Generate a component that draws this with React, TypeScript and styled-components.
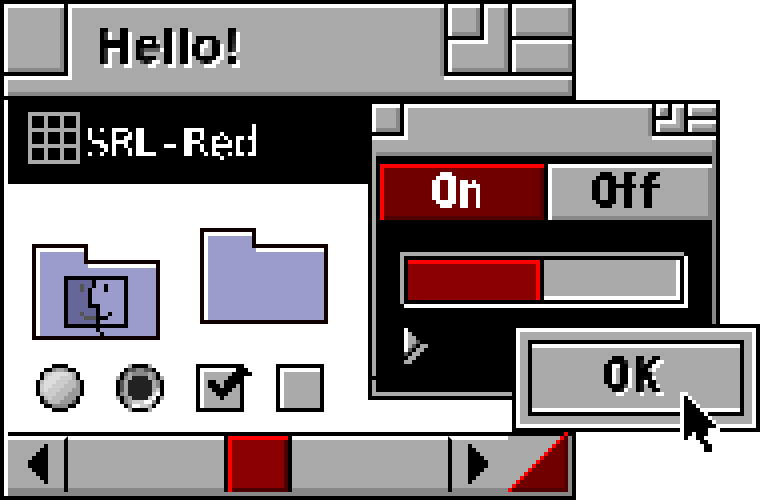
import React from 'react'
import styled, { createGlobalStyle } from 'styled-components'

const GRAY = '#aaaaaa'
const SHADE = '#888888'
const RED = '#ff0000'
const LAVENDER = '#9c9ccc'
const INK = '#100000'

const palette: Record<string, string> = {
  K: '#000000',
  X: '#222222',
  D: '#555555',
  G: '#888888',
  H: '#999999',
  A: '#aaaaaa',
  B: '#bbbbbb',
  C: '#cccccc',
  E: '#dddddd',
  W: '#ffffff',
}

const GlobalStyle = createGlobalStyle`
  html, body {
    margin: 0;
    background: #fff;
    overflow: hidden;
  }
`

const Stage = styled.div`
  position: relative;
  width: 760px;
  height: 500px;
  overflow: hidden;
`

const PixelText = styled.span`
  display: block;
  filter: url(#pixelate);
`

const Window = styled.div`
  position: absolute;
  left: 0;
  top: 0;
  width: 576px;
  height: 500px;
  box-sizing: border-box;
  padding: 4px;
  background: #000;
  display: flex;
  flex-direction: column;
  gap: 4px;
`

const TitleBar = styled.div`
  display: flex;
  flex-direction: column;
  flex: none;
`

const TitleRow = styled.div`
  display: flex;
  background: ${GRAY};
`

const TitleStrip = styled.div<{ $height: number; $edge?: string }>`
  height: ${p => p.$height}px;
  box-sizing: border-box;
  background: ${GRAY};
  border-left: 4px solid ${p => p.$edge || GRAY};
  box-shadow: inset -4px -4px 0 ${SHADE};
`

const Raised = styled.div<{ $w: number; $h: number }>`
  position: relative;
  width: ${p => p.$w}px;
  height: ${p => p.$h}px;
  box-sizing: border-box;
  flex: none;
  background: ${GRAY};
  border-top: 4px solid #fff;
  border-left: 4px solid #fff;
  box-shadow: inset -4px -4px 0 ${SHADE};
`

const BoxWell = styled.div`
  display: flex;
  flex: none;
  align-self: flex-start;
  border-right: 4px solid #fff;
  border-bottom: 4px solid #fff;
`

const BoxFrame = styled.div`
  display: flex;
  border-right: 4px solid #000;
  border-bottom: 4px solid #000;
`

const NestedBox = styled.div`
  position: absolute;
  left: -4px;
  top: -4px;
`

const TitleCenter = styled.div<{ $height: number }>`
  flex: 1;
  height: ${p => p.$height}px;
  box-sizing: border-box;
  border-top: 4px solid #fff;
  padding: 8px 0 0 24px;
  box-shadow: inset -4px 0 0 ${SHADE};
`

const TitleText = styled(PixelText)`
  font: bold 50px/60px 'Liberation Sans', sans-serif;
  color: #000;
  -webkit-text-stroke: 0.6px #000;
  letter-spacing: 1px;
  text-shadow: 4px 4px 0 #fff;
  width: 160px;
  height: 60px;
`

const Controls = styled.div`
  display: flex;
  flex: none;
  border-bottom: 4px solid #fff;
`

const ControlsFrame = styled.div`
  display: flex;
  gap: 4px;
  background: #000;
  border-left: 4px solid #000;
  border-bottom: 4px solid #000;
`

const ControlStack = styled.div`
  display: flex;
  flex-direction: column;
  gap: 4px;
`

const Body = styled.div`
  flex: 1;
  min-height: 0;
  display: flex;
  flex-direction: column;
  background: #fff;
  border-left: 4px solid #fff;
`

const Band = styled.div`
  height: 84px;
  box-sizing: border-box;
  flex: none;
  padding: 12px 0 0 20px;
  background: #000;
  display: flex;
  gap: 4px;
`

const GridIcon = styled.div`
  display: grid;
  grid-template-columns: repeat(3, 12px);
  grid-auto-rows: 12px;
  gap: 4px;
  padding: 4px;
  align-self: flex-start;
  background: ${GRAY};
`

const GridCell = styled.div`
  background: #000;
`

const BandText = styled(PixelText)`
  font: 43px/54px 'DejaVu Sans Mono', monospace;
  color: #fff;
  letter-spacing: -1px;
  margin-top: 4px;
  width: 200px;
  height: 56px;
`

const Desk = styled.div`
  flex: 1;
  padding: 44px 0 0 24px;
  display: flex;
  flex-direction: column;
`

const FolderRow = styled.div`
  display: flex;
  align-items: flex-start;
  gap: 40px;
`

const FolderSlot = styled.div<{ $drop?: number }>`
  margin-top: ${p => p.$drop || 0}px;
  display: flex;
`

const WidgetRow = styled.div`
  display: flex;
  gap: 32px;
  margin: 24px 0 0 4px;
`

const CheckBox = styled.div`
  position: relative;
  width: 48px;
  height: 48px;
  box-sizing: border-box;
  border: 4px solid #000;
  background: ${GRAY};
  box-shadow: inset 4px 4px 0 #fff;
`

const CheckMark = styled.div`
  position: absolute;
  left: 8px;
  top: 0;
  display: flex;
`

const ScrollBar = styled.div`
  flex: none;
  display: flex;
  flex-direction: column;
  border-top: 4px solid #000;
  background: ${SHADE};
  padding: 0 4px 4px 0;
`

const ScrollRow = styled.div`
  display: flex;
  height: 56px;
  background: ${GRAY};
`

const ScrollPart = styled.div<{ $w?: number; $pad?: number; $divider?: 'left' | 'right' }>`
  ${p => (p.$w ? `width: ${p.$w}px; flex: none;` : 'flex: 1;')}
  box-sizing: border-box;
  display: flex;
  align-items: center;
  background: ${GRAY};
  border-top: 4px solid #fff;
  padding: 0 0 4px ${p => p.$pad || 0}px;
  box-shadow: inset 0 -4px 0 ${SHADE};
  ${p => p.$divider && `border-${p.$divider}: 4px solid #000;`}
`

const Thumb = styled.div`
  width: 60px;
  flex: none;
  box-sizing: border-box;
  background: #8b0000;
  border-top: 4px solid ${RED};
  border-left: 4px solid ${RED};
  box-shadow: inset -4px -4px 0 #4a0000, -4px 0 0 #000, 4px 0 0 #000;
  margin: 0 4px;
`

const Resize = styled.div`
  position: relative;
  width: 60px;
  flex: none;
`

const ResizeArt = styled.svg`
  position: absolute;
  left: 0;
  bottom: 0;
  display: block;
`

const Dialog = styled.div`
  position: absolute;
  left: 368px;
  top: 100px;
  width: 352px;
  height: 300px;
  box-sizing: border-box;
  padding: 4px;
  background: #000;
  display: flex;
  flex-direction: column;
`

const DialogFrame = styled.div`
  position: relative;
  flex: 1;
  display: flex;
  flex-direction: column;
  border-left: 4px solid ${GRAY};
  border-right: 4px solid ${SHADE};
  border-bottom: 4px solid ${GRAY};
  background: #000;
  padding: 8px 0 0 4px;
`

const FrameNotch = styled.div`
  position: absolute;
  left: -4px;
  top: 220px;
  width: 4px;
  height: 4px;
  background: #000;
`

const ToggleRow = styled.div`
  display: flex;
  gap: 4px;
`

const Toggle = styled.div<{ $on?: boolean }>`
  width: 164px;
  height: 56px;
  box-sizing: border-box;
  display: flex;
  padding-left: ${p => (p.$on ? 48 : 40)}px;
  background: ${p => (p.$on ? '#700000' : GRAY)};
  border-top: 4px solid ${p => (p.$on ? RED : '#fff')};
  border-left: 4px solid ${p => (p.$on ? RED : '#fff')};
  box-shadow: inset -4px -4px 0 ${p => (p.$on ? '#500000' : SHADE)};
`

const ToggleLabel = styled(PixelText)<{ $on?: boolean }>`
  font: bold 44px/48px 'DejaVu Sans Mono', monospace;
  color: ${p => (p.$on ? '#fff' : '#000')};
  -webkit-text-stroke: 1px ${p => (p.$on ? '#fff' : '#000')};
  letter-spacing: ${p => (p.$on ? '0' : '-4px')};
  height: 48px;
  width: 80px;
`

const Meter = styled.div`
  display: flex;
  gap: 4px;
  width: 280px;
  height: 48px;
  box-sizing: border-box;
  padding: 4px;
  margin: 36px 0 0 24px;
  background: #000;
  box-shadow:
    -4px 0 0 ${GRAY}, 0 -4px 0 ${GRAY}, -4px -4px 0 ${GRAY},
    4px 0 0 #fff, 0 4px 0 #fff, 4px 4px 0 #fff;
`

const MeterFill = styled.div`
  width: 132px;
  box-sizing: border-box;
  background: #8b0000;
  border-top: 4px solid ${RED};
  border-right: 4px solid ${RED};
`

const MeterRest = styled.div`
  flex: 1;
  background: ${GRAY};
  border-right: 4px solid #fff;
  border-bottom: 4px solid #fff;
`

const Disclosure = styled.div`
  display: flex;
  margin: 24px 0 0 24px;
`

const Alert = styled.div`
  position: absolute;
  left: 512px;
  top: 324px;
  width: 248px;
  height: 108px;
  box-sizing: border-box;
  border: 4px solid #000;
  display: flex;
`

const AlertInner = styled.div`
  flex: 1;
  display: flex;
  border: 4px solid #fff;
  background: ${GRAY};
  padding: 8px;
`

const OkFrame = styled.div`
  flex: 1;
  display: flex;
  border: 4px solid #000;
`

const OkButton = styled.div`
  flex: 1;
  display: flex;
  background: ${GRAY};
  border-top: 4px solid #fff;
  border-bottom: 4px solid #fff;
  padding: 4px 0 0 72px;
`

const OkLabel = styled(PixelText)`
  font: bold 44px/48px 'DejaVu Sans Mono', monospace;
  color: #000;
  -webkit-text-stroke: 1px #000;
  letter-spacing: 3px;
  text-shadow: 4px 4px 0 #fff;
  width: 80px;
  height: 52px;
`

const Cursor = styled.div`
  position: absolute;
  left: 680px;
  top: 392px;
  display: flex;
`

const ArtSvg = styled.svg`
  display: block;
  flex: none;
`

const Pixels: React.FC<{ rows: string[] }> = ({ rows }) => (
  <ArtSvg width={rows[0].length * 4} height={rows.length * 4} shapeRendering="crispEdges">
    {rows.map((row, y) =>
      row.split('').map((c, x) =>
        palette[c] ? <rect key={`${x}-${y}`} x={x * 4} y={y * 4} width={4} height={4} fill={palette[c]} /> : null
      )
    )}
  </ArtSvg>
)

const radioOff = [
  '....KKKK....',
  '..KKGAAGKK..',
  '.KBCEEEECAK.',
  '.KCEEECCCAK.',
  'KBEEECCCBBHK',
  'KCEECCCBBBHK',
  'KCECCCBBBHHK',
  'KBCCCBBBHHHK',
  '.KBCBBBHHHK.',
  '.KDBBBHHHDK.',
  '..KKGGGGKK..',
  '....KKKK....',
]

const radioOn = [
  '...AKKKKA...',
  '..KDDGGDDK..',
  '.KDAGGGGAGK.',
  'AKGAXXXXAGKA',
  'KDAXXXXXXAGK',
  'KDAXXXXXXAGK',
  'KDAXXXXXXACK',
  'KGAXXXXXXCWK',
  'AKGAXXXXCWKA',
  '.KGACCCWWGK.',
  '..KGWWCCAK..',
  '...AKKKKA...',
]

const check = [
  '.......KKK.',
  '......KKKKK',
  '.....KKKK..',
  'KK..KKKK...',
  'KKK.KKK....',
  '.KKKKK.....',
  '..KKK......',
  '...K.......',
]

const arrowLeft = ['....K', '...KK', '..KKK', '.KKKK', 'KKKKK', 'KKKKK', '.KKKK', '..KKK', '...KK', '....K']
const arrowRight = ['K....', 'KK...', 'KKK..', 'KKKK.', 'KKKKK', 'KKKKK', 'KKKK.', 'KKK..', 'KK...', 'K....']

const disclosure = ['W.....', 'WA....', 'WAA...', 'WAAD..', 'WAD.AA', 'WD.AA.', 'D.AA..', '.AA...', 'AA....']

const arrowCursor = [
  'WW........',
  'WKW.......',
  'WKKW......',
  'WKKKW.....',
  'WKKKKW....',
  'WKKKKKW...',
  'WKKKKKKW..',
  'WKKKKKKKW.',
  'WKKKKKKKKW',
  'WKKKKKKWWW',
  'WKKWKKKW..',
  'WKWWKKW...',
  'WW..WKKW..',
  '.....WKKW.',
  '.....WKKW.',
  '.....WWWW.',
]

const Folder: React.FC<{ finder?: boolean }> = ({ finder }) => (
  <ArtSvg width={128} height={96} shapeRendering="crispEdges">
    <polygon points="0,0 56,0 56,16 128,16 128,96 0,96" fill={INK} />
    <polygon points="4,4 52,4 52,20 124,20 124,92 4,92" fill="#fff" />
    <polygon points="8,8 52,8 52,20 56,20 56,24 124,24 124,92 8,92" fill={LAVENDER} />
    {finder && (
      <g>
        <polygon points="36,36 60,36 60,44 56,44 56,64 64,64 64,80 36,80" fill="#666699" />
        <path d="M32 32h64v52h-64zM36 36v44h56v-44z" fill="#000" fillRule="evenodd" />
        <rect x={60} y={36} width={4} height={8} fill="#000" />
        <rect x={56} y={44} width={4} height={20} fill="#000" />
        <rect x={56} y={60} width={12} height={4} fill="#000" />
        <rect x={64} y={64} width={4} height={24} fill="#000" />
        <rect x={68} y={88} width={4} height={4} fill="#000" />
        <rect x={48} y={40} width={4} height={8} fill="#555" />
        <rect x={72} y={40} width={4} height={8} fill="#000" />
        <rect x={48} y={68} width={4} height={4} fill="#555" />
        <rect x={52} y={72} width={12} height={4} fill="#555" />
        <rect x={64} y={72} width={12} height={4} fill="#000" />
        <rect x={76} y={68} width={4} height={4} fill="#000" />
      </g>
    )}
  </ArtSvg>
)

const ResizeCorner = () => {
  const cells: React.ReactNode[] = []
  for (let r = 0; r < 15; r++) {
    const start = 14 - r
    cells.push(<rect key={`r${r}`} x={start * 4} y={r * 4} width={4} height={4} fill={RED} />)
    if (r > 0) {
      cells.push(<rect key={`f${r}`} x={(start + 1) * 4} y={r * 4} width={(r - 1) * 4} height={4} fill="#700000" />)
      cells.push(<rect key={`s${r}`} x={56} y={r * 4} width={4} height={4} fill="#500000" />)
    }
  }
  cells.push(<rect key="bottom" x={4} y={56} width={56} height={4} fill="#500000" />)
  return (
    <ResizeArt width={60} height={60} shapeRendering="crispEdges">
      {cells}
    </ResizeArt>
  )
}

const CloseBox: React.FC<{ w: number; h: number }> = ({ w, h }) => (
  <BoxWell>
    <BoxFrame>
      <Raised $w={w} $h={h} />
    </BoxFrame>
  </BoxWell>
)

const WindowControls: React.FC<{ small?: boolean }> = ({ small }) => (
  <Controls>
    <ControlsFrame>
      <Raised $w={small ? 28 : 60} $h={small ? 28 : 68}>
        <NestedBox>
          <CloseBox w={small ? 12 : 32} h={small ? 12 : 32} />
        </NestedBox>
      </Raised>
      <ControlStack>
        <Raised $w={small ? 28 : 60} $h={small ? 12 : 32} />
        <Raised $w={small ? 28 : 60} $h={small ? 12 : 32} />
      </ControlStack>
    </ControlsFrame>
  </Controls>
)

// keeps the labels real text but snaps them to the 4px grid of the picture
const PixelFilter = () => (
  <svg width={0} height={0} style={{ position: 'absolute' }}>
    <filter
      id="pixelate"
      x="0"
      y="0"
      width="100%"
      height="100%"
      colorInterpolationFilters="sRGB"
      primitiveUnits="userSpaceOnUse"
    >
      <feFlood x={2} y={2} width={1} height={1} floodColor="#000" />
      <feComposite width={4} height={4} />
      <feTile result="grid" />
      <feComposite in="SourceGraphic" in2="grid" operator="in" />
      <feComponentTransfer>
        <feFuncA type="discrete" tableValues="0 1" />
      </feComponentTransfer>
      <feConvolveMatrix
        order={4}
        kernelMatrix="1 1 1 1 1 1 1 1 1 1 1 1 1 1 1 1"
        divisor={1}
        targetX={1}
        targetY={1}
        edgeMode="none"
        preserveAlpha={false}
      />
    </filter>
  </svg>
)

export default function App() {
  return (
    <Stage>
      <GlobalStyle />
      <PixelFilter />
      <Window>
        <TitleBar>
          <TitleRow>
            <CloseBox w={60} h={68} />
            <TitleCenter $height={72}>
              <TitleText>Hello!</TitleText>
            </TitleCenter>
            <WindowControls />
          </TitleRow>
          <TitleStrip $height={16} $edge="#fff" />
        </TitleBar>
        <Body>
          <Band>
            <GridIcon>
              {Array.from({ length: 9 }, (_, i) => <GridCell key={i} />)}
            </GridIcon>
            <BandText>SRL-Red</BandText>
          </Band>
          <Desk>
            <FolderRow>
              <FolderSlot $drop={16}><Folder finder /></FolderSlot>
              <FolderSlot><Folder /></FolderSlot>
            </FolderRow>
            <WidgetRow>
              <Pixels rows={radioOff} />
              <Pixels rows={radioOn} />
              <CheckBox>
                <CheckMark><Pixels rows={check} /></CheckMark>
              </CheckBox>
              <CheckBox />
            </WidgetRow>
          </Desk>
          <ScrollBar>
            <ScrollRow>
              <ScrollPart $w={60} $pad={20} $divider="right"><Pixels rows={arrowLeft} /></ScrollPart>
              <ScrollPart />
              <Thumb />
              <ScrollPart />
              <ScrollPart $w={60} $pad={16} $divider="left"><Pixels rows={arrowRight} /></ScrollPart>
              <Resize><ResizeCorner /></Resize>
            </ScrollRow>
          </ScrollBar>
        </Body>
      </Window>

      <Dialog>
        <TitleBar>
          <TitleRow>
            <CloseBox w={28} h={28} />
            <TitleCenter $height={32} />
            <WindowControls small />
          </TitleRow>
          <TitleStrip $height={16} />
        </TitleBar>
        <DialogFrame>
          <FrameNotch />
          <ToggleRow>
            <Toggle $on><ToggleLabel $on>On</ToggleLabel></Toggle>
            <Toggle><ToggleLabel>Off</ToggleLabel></Toggle>
          </ToggleRow>
          <Meter>
            <MeterFill />
            <MeterRest />
          </Meter>
          <Disclosure><Pixels rows={disclosure} /></Disclosure>
        </DialogFrame>
      </Dialog>

      <Alert>
        <AlertInner>
          <OkFrame>
            <OkButton>
              <OkLabel>OK</OkLabel>
            </OkButton>
          </OkFrame>
        </AlertInner>
      </Alert>

      <Cursor><Pixels rows={arrowCursor} /></Cursor>
    </Stage>
  )
}
